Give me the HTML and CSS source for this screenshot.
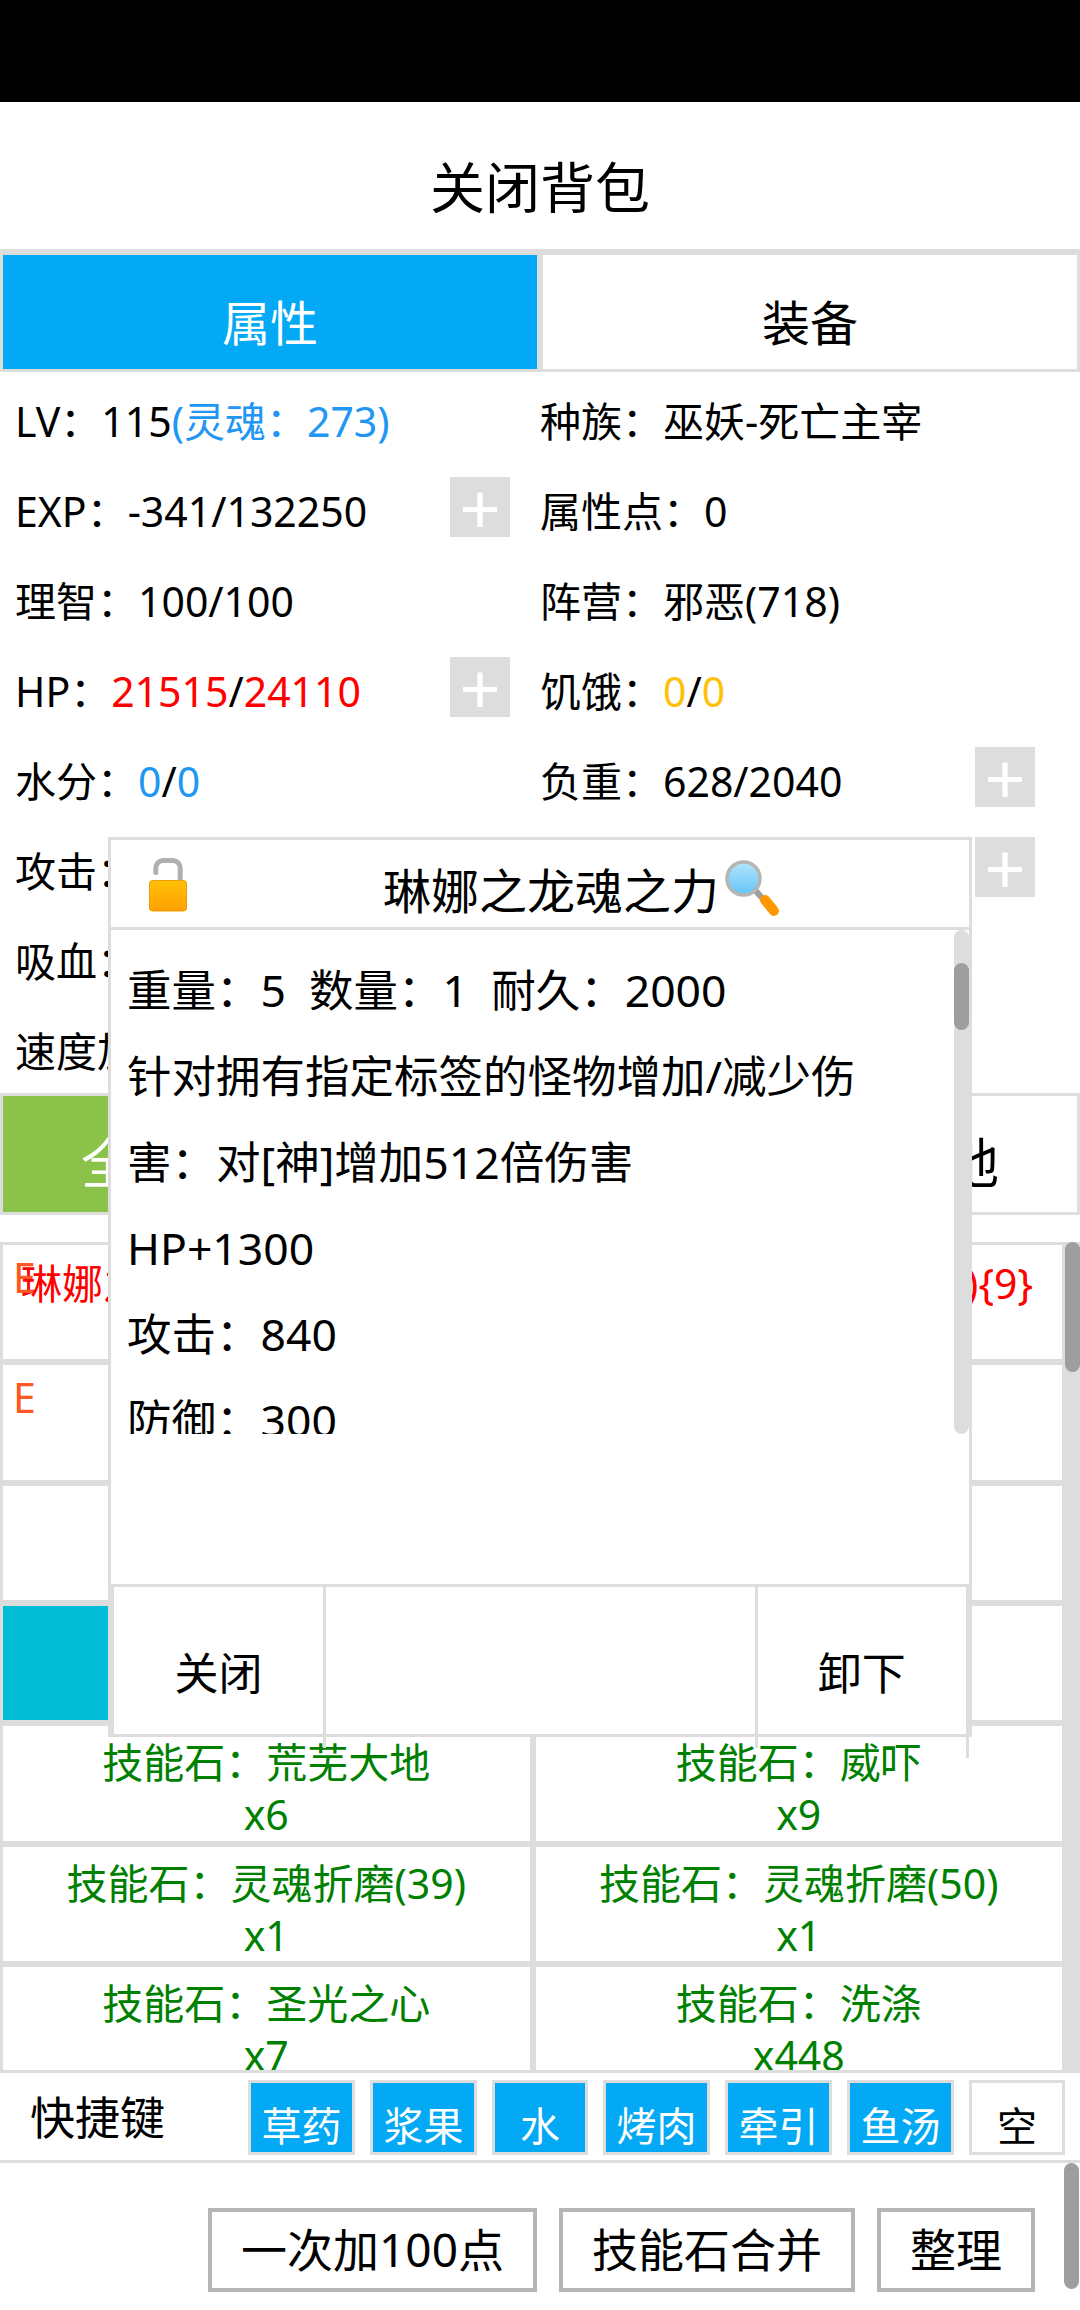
FILE: index.html
```html
<!DOCTYPE html>
<html lang="zh-CN">
<head>
    <meta charset="UTF-8">
    <meta name="viewport" content="width=device-width, initial-scale=1.0">
    <title>背包</title>
    <link rel="stylesheet" href="styles.css">
</head>
<body>
    <div class="status-bar"></div>
    <div class="page-title">关闭背包</div>

    <div class="main-tabs">
        <div class="main-tab active">属性</div>
        <div class="main-tab">装备</div>
    </div>

    <div class="stats">
        <div class="stat"><p>LV：115<span class="blue">(灵魂：273)</span></p></div>
        <div class="stat right"><p>种族：巫妖-死亡主宰</p></div>
        <div class="stat"><p>EXP：-341/132250</p><div class="plus">+</div></div>
        <div class="stat right"><p>属性点：0</p></div>
        <div class="stat"><p>理智：100/100</p></div>
        <div class="stat right"><p>阵营：邪恶(718)</p></div>
        <div class="stat"><p>HP：<span class="red">21515</span>/<span class="red">24110</span></p><div class="plus">+</div></div>
        <div class="stat right"><p>饥饿：<span class="yellow">0</span>/<span class="yellow">0</span></p></div>
        <div class="stat"><p>水分：<span class="blue">0</span>/<span class="blue">0</span></p></div>
        <div class="stat right"><p>负重：628/2040</p><div class="plus">+</div></div>
        <div class="stat"><p>攻击：840</p></div>
        <div class="stat right"><p>防御：300</p><div class="plus">+</div></div>
        <div class="stat"><p>吸血：0</p></div>
        <div class="stat right"><p></p></div>
        <div class="stat"><p>速度加成：0</p></div>
        <div class="stat right"><p></p></div>
    </div>

    <div class="filter-tabs">
        <div class="filter-tab active">全部</div>
        <div class="filter-tab">装备</div>
        <div class="filter-tab">材料</div>
        <div class="filter-tab">当地</div>
    </div>

    <div class="bag">
        <div class="bag-grid">
            <div class="item wide red"><span class="badge">E</span><span>琳娜之龙魂之力</span><span>(9){9}</span></div>
            <div class="item"><span class="badge">E</span></div>
            <div class="item"></div>
            <div class="item"></div>
            <div class="item"></div>
            <div class="item cyan"></div>
            <div class="item"></div>
            <div class="item green">技能石：荒芜大地<br>x6</div>
            <div class="item green">技能石：威吓<br>x9</div>
            <div class="item green">技能石：灵魂折磨(39)<br>x1</div>
            <div class="item green">技能石：灵魂折磨(50)<br>x1</div>
            <div class="item green">技能石：圣光之心<br>x7</div>
            <div class="item green">技能石：洗涤<br>x448</div>
        </div>
        <div class="bag-track"><div class="thumb"></div></div>
    </div>

    <div class="hotkeys">
        <div class="hotkeys-label">快捷键</div>
        <div class="key on">草药</div>
        <div class="key on">浆果</div>
        <div class="key on">水</div>
        <div class="key on">烤肉</div>
        <div class="key on">牵引</div>
        <div class="key on">鱼汤</div>
        <div class="key">空</div>
    </div>

    <div class="footer">
        <div class="btn">一次加100点</div>
        <div class="btn">技能石合并</div>
        <div class="btn">整理</div>
        <div class="footer-thumb"></div>
    </div>

    <!-- 物品详情弹窗 -->
    <div class="modal">
        <div class="modal-title">
            <div class="lock">
                <svg xmlns="http://www.w3.org/2000/svg" width="38" height="54" viewBox="0 0 38 54">
                    <defs>
                        <linearGradient id="lockBody" x1="0" y1="0" x2="0" y2="1">
                            <stop offset="0" stop-color="#ffc107"/>
                            <stop offset="1" stop-color="#ffa000"/>
                        </linearGradient>
                    </defs>
                    <path d="M6.8 14.5V10a7.5 7.5 0 0 1 7.5-7.5h9.4a7.5 7.5 0 0 1 7.5 7.5V24" fill="none" stroke="#b0b0b0" stroke-width="5" stroke-linecap="round"/>
                    <rect x="0.5" y="22.5" width="37" height="30.5" rx="3" fill="url(#lockBody)" stroke="#f29d00"/>
                </svg>
            </div>
            <div class="modal-name">
                <span>琳娜之龙魂之力</span>
                <svg xmlns="http://www.w3.org/2000/svg" width="60" height="58" viewBox="2 0 60 58">
                    <defs>
                        <linearGradient id="lens" x1="0" y1="0" x2="0" y2="1">
                            <stop offset="0" stop-color="#b3e5fc"/>
                            <stop offset="1" stop-color="#64c3f6"/>
                        </linearGradient>
                    </defs>
                    <line x1="38" y1="31" x2="46" y2="40" stroke="#9e9e9e" stroke-width="6"/>
                    <line x1="48" y1="41" x2="57" y2="52" stroke="#ff9800" stroke-width="10" stroke-linecap="round"/>
                    <circle cx="26.5" cy="19.5" r="16.5" fill="url(#lens)" stroke="#b5b5b5" stroke-width="3.5"/>
                </svg>
            </div>
        </div>
        <div class="modal-body">
            <div class="modal-text">
                <p>重量：5&nbsp;&nbsp;数量：1&nbsp;&nbsp;耐久：2000</p>
                <p>针对拥有指定标签的怪物增加/减少伤害：对[神]增加512倍伤害</p>
                <p>HP+1300</p>
                <p>攻击：840</p>
                <p>防御：300</p>
            </div>
            <div class="modal-track"><div class="thumb"></div></div>
        </div>
        <div class="modal-space"></div>
        <div class="modal-actions">
            <div class="action">关闭</div>
            <div class="action"></div>
            <div class="action">卸下</div>
        </div>
    </div>
</body>
</html>
```

FILE: styles.css
```css
* {
    box-sizing: border-box;
}

html, body {
    margin: 0;
    padding: 0;
}

body {
    width: 1080px;
    height: 2310px;
    overflow: hidden;
    position: relative;
    background: white;
    color: black;
    font-family: "Noto Sans", "Noto Sans CJK SC", sans-serif;
    font-size: 41px;
}

p {
    margin: 0;
}

.blue { color: #2196f3; }
.red { color: #f00; }
.yellow { color: #ffc107; }

.status-bar {
    height: 102px;
    background: black;
}

.page-title {
    height: 147px;
    padding-top: 16px;
    display: flex;
    justify-content: center;
    align-items: center;
    font-size: 55px;
}

.main-tabs {
    display: flex;
    border-top: 3px solid #ddd;
}

.main-tab {
    width: 540px;
    height: 120px;
    padding-top: 16px;
    display: flex;
    justify-content: center;
    align-items: center;
    border: 3px solid #ddd;
    font-size: 48px;
}

.main-tab.active {
    background: #03a9f4;
    color: white;
}

/* 属性列表 */
.stats {
    height: 721px;
    padding-top: 4px;
    display: grid;
    grid-template-columns: 540px 540px;
    grid-auto-rows: 90px;
}

.stat {
    display: flex;
    justify-content: space-between;
    align-items: flex-start;
    padding: 0 30px 0 15px;
    line-height: 90px;
    white-space: nowrap;
}

.stat.right {
    padding: 0 45px 0 0;
}

.plus {
    width: 60px;
    height: 60px;
    margin-top: 11px;
    background: #ddd;
    color: white;
    font-size: 72px;
    line-height: 60px;
    text-align: center;
}

.filter-tabs {
    display: grid;
    grid-template-columns: repeat(4, 270px);
    height: 122px;
}

.filter-tab {
    padding-top: 12px;
    display: flex;
    justify-content: center;
    align-items: center;
    border: 3px solid #ddd;
    font-size: 54px;
}

.filter-tab.active {
    background: #8bc34a;
    color: white;
}

/* 背包格子 */
.bag {
    margin-top: 27px;
    height: 828px;
    display: flex;
    overflow: hidden;
}

.bag-grid {
    width: 1065px;
    display: grid;
    grid-template-columns: 532.5px 532.5px;
    grid-auto-rows: 120.33px;
}

.item {
    position: relative;
    border: 3px solid #ddd;
    padding-top: 10px;
    line-height: 52px;
    text-align: center;
    white-space: nowrap;
}

.item.wide {
    grid-column: 1 / -1;
    display: flex;
    justify-content: space-between;
    padding-top: 12px;
    padding-left: 18px;
    padding-right: 29px;
}

.item.green { color: #008000; }
.item.cyan { background: #00bcd4; }

.badge {
    position: absolute;
    left: 10px;
    top: 6px;
    color: #ff5722;
}

.bag-track {
    width: 15px;
    background: #ddd;
}

.bag-track .thumb {
    height: 130px;
    background: #9e9e9e;
    border-radius: 8px;
}

.hotkeys {
    height: 93px;
    padding: 7px 0 0 30px;
    display: flex;
    align-items: flex-start;
    gap: 15px;
    border-top: 3px solid #ddd;
    border-bottom: 3px solid #ddd;
}

.hotkeys-label {
    width: 203px;
    font-size: 45px;
    line-height: 76px;
}

.key {
    min-width: 96px;
    height: 75px;
    padding: 12px 10.5px 0;
    display: flex;
    justify-content: center;
    align-items: center;
    border: 3px solid #ddd;
    font-size: 40px;
}

.key.on {
    background: #03a9f4;
    color: white;
}

.footer {
    position: relative;
    height: 147px;
    padding: 45px 45px 0 0;
    display: flex;
    justify-content: flex-end;
    align-items: flex-start;
    gap: 22px;
}

.btn {
    height: 84px;
    padding: 0 29px 6px;
    display: flex;
    align-items: center;
    border: 4px solid #b5b5b5;
    font-size: 46px;
}

.footer-thumb {
    position: absolute;
    right: 1px;
    top: 0;
    width: 15px;
    height: 126px;
    background: #9e9e9e;
    border-radius: 8px;
}

/* 弹窗 */
.modal {
    position: absolute;
    left: 108px;
    top: 837px;
    width: 864px;
    height: 900px;
    background: white;
    border: 3px solid #ddd;
    display: flex;
    flex-direction: column;
}

.modal-title {
    height: 90px;
    flex: none;
    display: flex;
    align-items: center;
    border-bottom: 3px solid #ddd;
}

.lock {
    width: 82px;
    flex: none;
    padding-left: 38px;
    padding-top: 2px;
    display: flex;
}

.modal-name {
    flex: 1;
    padding-top: 8px;
    display: flex;
    justify-content: center;
    align-items: center;
    font-size: 48px;
}

.modal-body {
    height: 504px;
    flex: none;
    display: flex;
    overflow: hidden;
}

.modal-text {
    flex: 1;
    padding: 17px 0 0 16px;
    font-size: 44.5px;
    line-height: 86px;
}

.modal-text p {
    max-width: 760px;
}

.modal-track {
    width: 15px;
    background: #ddd;
    border-radius: 8px;
    padding-top: 33px;
}

.modal-track .thumb {
    height: 67px;
    background: #9e9e9e;
    border-radius: 8px;
}

.modal-space {
    flex: 1;
}

.modal-actions {
    height: 150px;
    flex: none;
    display: grid;
    grid-template-columns: 212px 431.5px 211.5px;
    border-top: 3px solid #ddd;
    border-left: 3px solid #ddd;
}

.action {
    position: relative;
    padding-top: 20px;
    display: flex;
    justify-content: center;
    align-items: center;
    border-right: 3px solid #ddd;
    font-size: 44px;
}

.action::after {
    content: "";
    position: absolute;
    right: -3px;
    top: 100%;
    width: 3px;
    height: 14px;
    background: #ddd;
}

.action:last-child::after {
    height: 24px;
}
```
